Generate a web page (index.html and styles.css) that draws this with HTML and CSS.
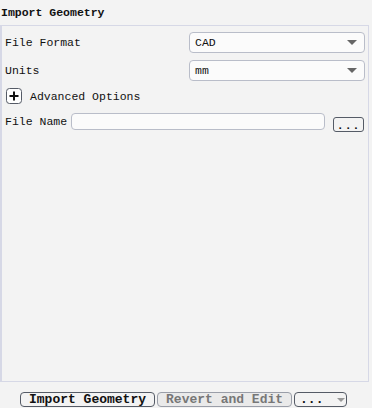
FILE: index.html
```html
<!DOCTYPE html>
<html lang="en">
<head>
  <meta charset="UTF-8">
  <title>Import Geometry</title>
  <link rel="stylesheet" href="styles.css">
</head>
<body>
  <div class="page">
    <div class="title">Import Geometry</div>

    <div class="panel">
      <div class="row">
        <span class="label">File Format</span>
        <div class="select"><span>CAD</span><i class="caret"></i></div>
      </div>
      <div class="row">
        <span class="label">Units</span>
        <div class="select"><span>mm</span><i class="caret"></i></div>
      </div>
      <div class="adv">
        <span class="plus">
          <svg width="16" height="16" viewBox="0 0 16 16">
            <rect x="0.5" y="0.5" width="15" height="15" rx="3" fill="#fff" stroke="#555b66"/>
            <path d="M8 3.5v9M3.5 8h9" stroke="#111" stroke-width="2"/>
          </svg>
        </span>
        <span>Advanced Options</span>
      </div>
      <div class="file-row">
        <span class="label">File Name</span>
        <div class="input"></div>
        <span class="browse">...</span>
      </div>
    </div>

    <div class="footer">
      <span class="btn">Import Geometry</span>
      <span class="btn disabled">Revert and Edit</span>
      <span class="btn menu">...<i class="caret light"></i></span>
    </div>
  </div>
</body>
</html>
```

FILE: styles.css
```css
:root {
  --bg: #f3f3f3;
  --frame: #d6d8e6;
  --field: #b9bdc9;
  --text: #111;
  --mono: "Liberation Mono", "DejaVu Sans Mono", monospace;
}

body {
  margin: 0;
  background: var(--bg);
  font-family: var(--mono);
  font-size: 11.5px;
  color: var(--text);
}

.page {
  width: 372px;
  height: 408px;
  display: flex;
  flex-direction: column;
}

.title {
  height: 25px;
  line-height: 26px;
  padding-left: 1px;
  font-weight: bold;
  box-sizing: border-box;
}

.panel {
  width: 369px;
  height: 357px;
  box-sizing: border-box;
  border: 1px solid var(--frame);
  border-left-width: 2px;
  padding: 5px 0 0 3px;
}

.row {
  display: flex;
  align-items: center;
  height: 22px;
  margin-bottom: 6px;
}

.row .label {
  width: 184px;
}

.select {
  width: 176px;
  height: 21px;
  box-sizing: border-box;
  border: 1px solid var(--field);
  border-radius: 4px;
  background: #fbfbfb;
  display: flex;
  align-items: center;
  justify-content: space-between;
  padding: 0 7px 0 5px;
}

.caret {
  width: 0;
  height: 0;
  border-left: 5px solid transparent;
  border-right: 5px solid transparent;
  border-top: 5px solid #666;
}

.caret.light {
  border-top-color: #999;
  border-left-width: 4px;
  border-right-width: 4px;
  border-top-width: 4px;
}

.adv {
  display: flex;
  align-items: center;
  gap: 8px;
  height: 18px;
  margin: 3px 0 0 1px;
}

.plus svg {
  display: block;
}

.file-row {
  display: flex;
  align-items: center;
  height: 18px;
  margin-top: 7px;
}

.input {
  width: 254px;
  height: 17px;
  box-sizing: border-box;
  margin-left: 4px;
  border: 1px solid var(--field);
  border-radius: 4px;
  background: #fbfbfb;
}

.browse {
  width: 31px;
  height: 15px;
  box-sizing: border-box;
  margin: 7px 0 0 8px;
  border: 1px solid #555b66;
  border-radius: 3px;
  font-weight: bold;
  line-height: 15px;
  text-align: center;
  letter-spacing: 1px;
}

.footer {
  display: flex;
  gap: 2px;
  padding: 10px 0 0 20px;
}

.btn {
  height: 15px;
  box-sizing: border-box;
  border: 1px solid #555b66;
  border-radius: 4px;
  padding: 0 8px;
  font-size: 13px;
  font-weight: bold;
  line-height: 13px;
}

.btn.disabled {
  border-color: #9a9ea8;
  color: #777;
  background: #eaeaea;
}

.btn.menu {
  display: flex;
  align-items: center;
  gap: 14px;
  width: 53px;
  padding: 0 5px;
  border-color: #555b66;
}
```
